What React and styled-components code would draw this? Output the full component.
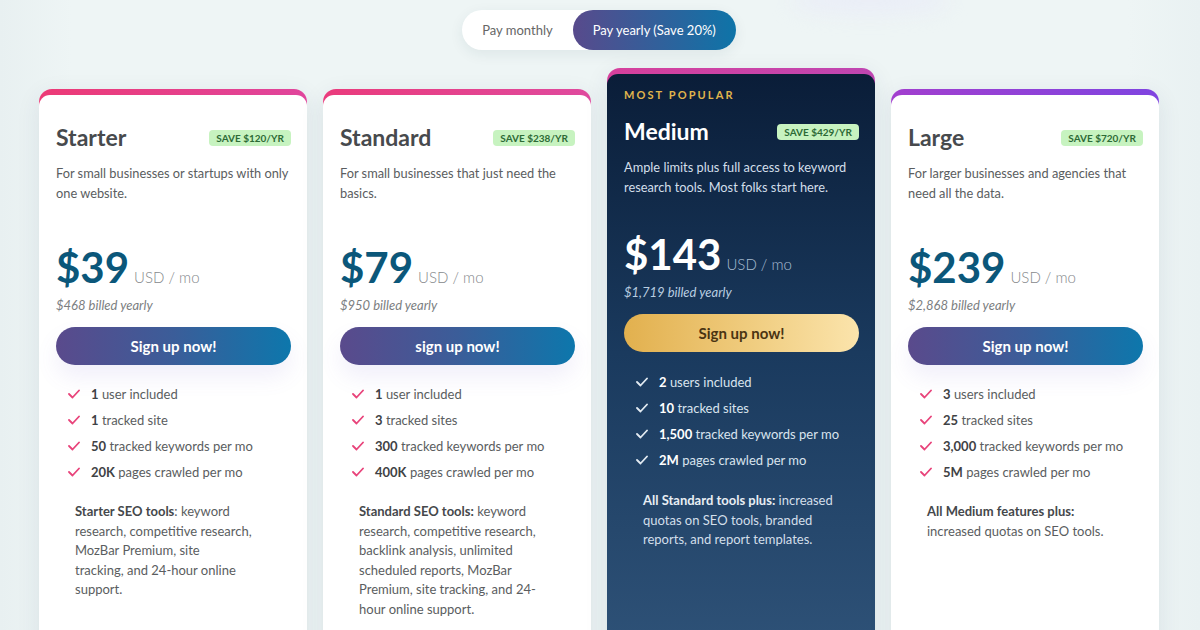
import React from "react";
import styled, { createGlobalStyle } from "styled-components";

const GlobalStyle = createGlobalStyle`
  html, body {
    margin: 0;
    padding: 0;
    background: #eef5f5;
    font-family: "Lato", "Open Sans", sans-serif;
    overflow: hidden;
  }
  #root {
    width: 1200px;
    height: 630px;
    overflow: hidden;
  }
`;

const Page = styled.div`
  width: 1200px;
  height: 630px;
  display: flex;
  flex-direction: column;
  align-items: center;
  padding: 10px 2px 0 0;
  box-sizing: border-box;
  background: linear-gradient(90deg, #e8f0f1 0%, #eef5f5 6%, #eef5f5 94%, #e9f1f2 100%);
  position: relative;
  overflow: hidden;
`;

const Glow = styled.div`
  position: absolute;
  top: -12px;
  left: 790px;
  width: 160px;
  height: 26px;
  border-radius: 50%;
  background: rgba(232, 232, 250, 0.55);
  filter: blur(10px);
`;

const Toggle = styled.div`
  display: flex;
  align-items: center;
  height: 40px;
  background: #fff;
  border-radius: 20px;
  box-shadow: 0 4px 14px rgba(20, 60, 80, 0.08);
`;

const ToggleOption = styled.button`
  border: none;
  height: 40px;
  padding: 0 20px;
  border-radius: 20px;
  font-family: inherit;
  font-size: 13px;
  color: ${(p) => (p.$active ? "#fff" : "#666")};
  background: ${(p) =>
    p.$active ? "linear-gradient(90deg, #584a8c 0%, #0e74a8 100%)" : "transparent"};
  cursor: pointer;
`;

const Row = styled.div`
  display: flex;
  gap: 16px;
  align-items: flex-start;
  margin-top: 18px;
`;

const Card = styled.div`
  width: 268px;
  margin-top: ${(p) => (p.$featured ? "0" : "21px")};
  padding-top: 6px;
  border-radius: 13px 13px 0 0;
  background: ${(p) => p.$strip};
  box-shadow: 0 6px 24px rgba(30, 60, 90, 0.09);
`;

const CardBody = styled.div`
  min-height: 620px;
  border-radius: 11px 11px 0 0;
  padding: ${(p) => (p.$featured ? "14px" : "27px")} 16px 0 17px;
  box-sizing: border-box;
  background: ${(p) =>
    p.$featured ? "linear-gradient(180deg, #0a1d38 0%, #1a3a5e 45%, #31557b 100%)" : "#fff"};
`;

const Popular = styled.div`
  font-size: 11px;
  line-height: 14px;
  font-weight: 700;
  letter-spacing: 2.1px;
  color: #e0b54c;
  margin-bottom: 14px;
`;

const TitleRow = styled.div`
  display: flex;
  align-items: center;
  justify-content: space-between;
  height: 30px;
`;

const Title = styled.h2`
  margin: 0;
  font-size: 23px;
  line-height: 30px;
  font-weight: 700;
  color: ${(p) => (p.$featured ? "#fff" : "#474a4d")};
`;

const Badge = styled.span`
  font-size: 10px;
  font-weight: 700;
  line-height: 16px;
  padding: 0 7px;
  border-radius: 4px;
  background: #c7f3c0;
  color: #2d6a36;
  margin-top: 2px;
`;

const Desc = styled.p`
  margin: 12px 0 0;
  font-size: 12.8px;
  line-height: 19.5px;
  color: ${(p) => (p.$featured ? "#d3dfea" : "#5a5d60")};
  min-height: ${(p) => (p.$featured ? "53px" : "60px")};
`;

const PriceRow = styled.div`
  display: flex;
  align-items: baseline;
  margin-top: 20px;
  height: 46px;
`;

const Amount = styled.span`
  font-size: 42px;
  line-height: 46px;
  font-weight: 700;
  color: ${(p) => (p.$featured ? "#fff" : "#0b577a")};
`;

const Unit = styled.span`
  font-size: 15px;
  font-weight: 300;
  margin-left: 5px;
  color: ${(p) => (p.$featured ? "#a9bed2" : "#85888b")};
`;

const Billed = styled.div`
  margin-top: 6px;
  font-size: 13px;
  line-height: 18px;
  font-style: italic;
  color: ${(p) => (p.$featured ? "#b9cde0" : "#7b7e81")};
`;

const SignUp = styled.button`
  display: block;
  width: 235px;
  height: 38px;
  margin-top: 13px;
  border: none;
  border-radius: 19px;
  font-family: inherit;
  font-size: 15px;
  font-weight: 700;
  cursor: pointer;
  color: ${(p) => (p.$featured ? "#4a3412" : "#fff")};
  background: ${(p) =>
    p.$featured
      ? "linear-gradient(90deg, #e2b04e 0%, #f0cd80 55%, #fbe4ac 100%)"
      : "linear-gradient(90deg, #5a4a8c 0%, #3b5d99 50%, #0d77ac 100%)"};
  box-shadow: ${(p) => (p.$featured ? "none" : "0 12px 22px rgba(120, 100, 210, 0.1)")};
`;

const Features = styled.ul`
  list-style: none;
  margin: ${(p) => (p.$featured ? "17px" : "16px")} 0 0;
  padding: 0 0 0 12px;
`;

const Feature = styled.li`
  display: flex;
  align-items: center;
  gap: 11px;
  height: 26px;
  font-size: 13px;
  color: ${(p) => (p.$featured ? "#d9e4ee" : "#5a5d60")};

  b {
    font-weight: 700;
    color: ${(p) => (p.$featured ? "#fff" : "#3f4245")};
  }
`;

const Tools = styled.p`
  margin: ${(p) => (p.$featured ? "18px" : "17px")} 0 0;
  padding-left: 19px;
  font-size: 13px;
  line-height: 19.5px;
  white-space: nowrap;
  color: ${(p) => (p.$featured ? "#d3dfea" : "#5a5d60")};

  b {
    font-weight: 700;
    color: ${(p) => (p.$featured ? "#e8eef4" : "#45484b")};
  }
`;

function Check({ color }) {
  return (
    <svg width="12" height="10" viewBox="0 0 12 10">
      <polyline
        points="1,5 4.5,8.5 11,1.5"
        fill="none"
        stroke={color}
        strokeWidth="1.8"
        strokeLinecap="round"
        strokeLinejoin="round"
      />
    </svg>
  );
}

const plans = [
  {
    name: "Starter",
    save: "SAVE $120/YR",
    strip: "linear-gradient(90deg, #ec3a76, #e0459c)",
    desc: "For small businesses or startups with only one website.",
    price: "$39",
    billed: "$468 billed yearly",
    cta: "Sign up now!",
    features: [
      ["1", "user included"],
      ["1", "tracked site"],
      ["50", "tracked keywords per mo"],
      ["20K", "pages crawled per mo"],
    ],
    toolsLead: "Starter SEO tools",
    tools: [": keyword", "research, competitive research,", "MozBar Premium, site", "tracking, and 24-hour online", "support."],
  },
  {
    name: "Standard",
    save: "SAVE $238/YR",
    strip: "linear-gradient(90deg, #ea3b7c, #df4a9e)",
    desc: "For small businesses that just need the basics.",
    price: "$79",
    billed: "$950 billed yearly",
    cta: "sign up now!",
    features: [
      ["1", "user included"],
      ["3", "tracked sites"],
      ["300", "tracked keywords per mo"],
      ["400K", "pages crawled per mo"],
    ],
    toolsLead: "Standard SEO tools:",
    tools: [" keyword", "research, competitive research,", "backlink analysis, unlimited", "scheduled reports, MozBar", "Premium, site tracking, and 24-", "hour online support."],
  },
  {
    name: "Medium",
    featured: true,
    save: "SAVE $429/YR",
    strip: "linear-gradient(90deg, #d6409c, #bf46b2)",
    desc: "Ample limits plus full access to keyword research tools. Most folks start here.",
    price: "$143",
    billed: "$1,719 billed yearly",
    cta: "Sign up now!",
    features: [
      ["2", "users included"],
      ["10", "tracked sites"],
      ["1,500", "tracked keywords per mo"],
      ["2M", "pages crawled per mo"],
    ],
    toolsLead: "All Standard tools plus:",
    tools: [" increased", "quotas on SEO tools, branded", "reports, and report templates."],
  },
  {
    name: "Large",
    save: "SAVE $720/YR",
    strip: "linear-gradient(90deg, #a23fce, #7f44e0)",
    desc: "For larger businesses and agencies that need all the data.",
    price: "$239",
    billed: "$2,868 billed yearly",
    cta: "Sign up now!",
    features: [
      ["3", "users included"],
      ["25", "tracked sites"],
      ["3,000", "tracked keywords per mo"],
      ["5M", "pages crawled per mo"],
    ],
    toolsLead: "All Medium features plus:",
    tools: ["", "increased quotas on SEO tools."],
  },
];

function PlanCard({ plan }) {
  const f = !!plan.featured;
  return (
    <Card $featured={f} $strip={plan.strip}>
      <CardBody $featured={f}>
        {f && <Popular>MOST POPULAR</Popular>}
        <TitleRow>
          <Title $featured={f}>{plan.name}</Title>
          <Badge>{plan.save}</Badge>
        </TitleRow>
        <Desc $featured={f}>{plan.desc}</Desc>
        <PriceRow>
          <Amount $featured={f}>{plan.price}</Amount>
          <Unit $featured={f}>USD / mo</Unit>
        </PriceRow>
        <Billed $featured={f}>{plan.billed}</Billed>
        <SignUp $featured={f}>{plan.cta}</SignUp>
        <Features $featured={f}>
          {plan.features.map(([num, text]) => (
            <Feature key={text} $featured={f}>
              <Check color={f ? "#e3ebf2" : "#e8437a"} />
              <span>
                <b>{num}</b> {text}
              </span>
            </Feature>
          ))}
        </Features>
        <Tools $featured={f}>
          <b>{plan.toolsLead}</b>
          {plan.tools.map((line, i) => (
            <React.Fragment key={i}>
              {i > 0 && <br />}
              {line}
            </React.Fragment>
          ))}
        </Tools>
      </CardBody>
    </Card>
  );
}

export default function App() {
  return (
    <>
      <GlobalStyle />
      <Page>
        <Glow />
        <Toggle>
          <ToggleOption>Pay monthly</ToggleOption>
          <ToggleOption $active>Pay yearly (Save 20%)</ToggleOption>
        </Toggle>
        <Row>
          {plans.map((p) => (
            <PlanCard key={p.name} plan={p} />
          ))}
        </Row>
      </Page>
    </>
  );
}
